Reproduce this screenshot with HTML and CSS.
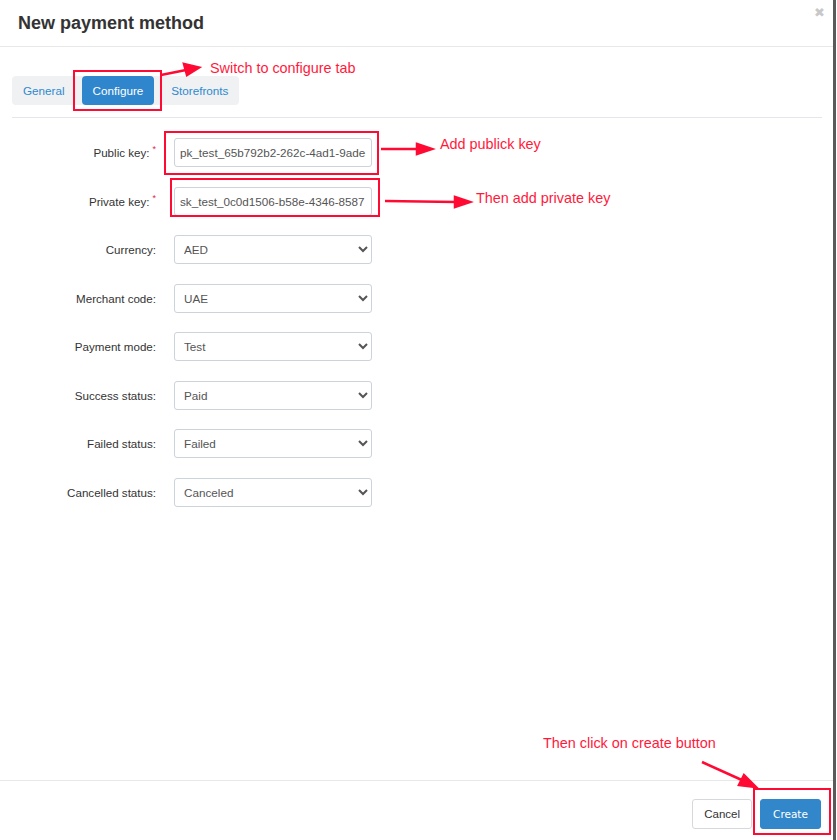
FILE: index.html
```html
<!DOCTYPE html>
<html lang="en">
<head>
  <meta charset="UTF-8" />
  <title>New payment method</title>
  <link rel="stylesheet" href="styles.css">
</head>
<body>
  <div class="modal">
    <div class="modal-header">
      <h3>New payment method</h3>
      <span class="close">&#10006;</span>
    </div>

    <div class="modal-body">
      <div class="tabs">
        <a class="tab">General</a>
        <a class="tab active">Configure</a>
        <a class="tab">Storefronts</a>
      </div>

      <div class="form">
        <div class="row">
          <label>Public key:<span class="req">*</span></label>
          <input type="text" value="pk_test_65b792b2-262c-4ad1-9ade" />
        </div>
        <div class="row">
          <label>Private key:<span class="req">*</span></label>
          <input type="text" value="sk_test_0c0d1506-b58e-4346-8587" />
        </div>
        <div class="row">
          <label>Currency:</label>
          <select><option>AED</option></select>
        </div>
        <div class="row">
          <label>Merchant code:</label>
          <select><option>UAE</option></select>
        </div>
        <div class="row">
          <label>Payment mode:</label>
          <select><option>Test</option></select>
        </div>
        <div class="row">
          <label>Success status:</label>
          <select><option>Paid</option></select>
        </div>
        <div class="row">
          <label>Failed status:</label>
          <select><option>Failed</option></select>
        </div>
        <div class="row">
          <label>Cancelled status:</label>
          <select><option>Canceled</option></select>
        </div>
      </div>
    </div>

    <div class="modal-footer">
      <button class="btn">Cancel</button>
      <button class="btn btn-primary">Create</button>
    </div>
  </div>

  <div class="scroll-edge"></div>

  <!-- annotations drawn over the screenshot -->
  <svg class="notes" width="837" height="840" viewBox="0 0 837 840">
    <g fill="none" stroke="#ff0a33" stroke-width="2">
      <rect x="74" y="71" width="87" height="39"/>
      <rect x="165" y="132" width="213" height="42"/>
      <rect x="171" y="179" width="208" height="37"/>
      <rect x="754" y="789" width="76" height="45"/>
    </g>
    <g stroke="#ff0a33" stroke-width="2.5" fill="#ff0a33">
      <line x1="161" y1="75" x2="186" y2="70"/>
      <polygon points="184,64 199,67.5 187,75"/>
      <line x1="381" y1="149" x2="418" y2="149"/>
      <polygon points="417,144 432,149 417,154"/>
      <line x1="385" y1="201" x2="456" y2="202"/>
      <polygon points="455,197 470,202 455,207"/>
      <line x1="702" y1="762" x2="744" y2="781"/>
      <polygon points="739,785 756,787 744,775"/>
    </g>
  </svg>
  <span class="note n1">Switch to configure tab</span>
  <span class="note n2">Add publick key</span>
  <span class="note n3">Then add private key</span>
  <span class="note n4">Then click on create button</span>
</body>
</html>
```

FILE: styles.css
```css
body {
  margin: 0;
  width: 837px;
  height: 840px;
  overflow: hidden;
  background: #fff;
  font-family: "Liberation Sans", Arial, sans-serif;
  color: #333;
  position: relative;
}

.modal {
  width: 833px;
  height: 840px;
  display: flex;
  flex-direction: column;
  background: #fff;
}

.modal-header {
  height: 47px;
  border-bottom: 1px solid #e8e8e8;
  padding: 0 18px;
  display: flex;
  align-items: center;
  justify-content: space-between;
  box-sizing: border-box;
}

.modal-header h3 {
  margin: 0;
  font-size: 18px;
  font-weight: bold;
  color: #333;
}

.close {
  color: #c8c8c8;
  font-size: 13px;
  align-self: flex-start;
  margin-top: 5px;
  margin-right: -10px;
}

.modal-body {
  flex: 1;
  padding: 29px 11px 0 12px;
}

.tabs {
  display: inline-flex;
  background: #f0f1f2;
  border-radius: 4px;
  height: 29px;
  align-items: center;
  gap: 6px;
}

.tab {
  font-size: 11.7px;
  color: #2d8ad0;
  padding: 0 11px;
  line-height: 29px;
  border-radius: 4px;
}

.tab.active {
  background: #2f86cc;
  color: #fff;
}

.form {
  border-top: 1px solid #e3e6ea;
  margin-top: 12px;
  padding-top: 20px;
}

.row {
  display: flex;
  align-items: center;
  height: 29px;
  margin-bottom: 19.5px;
}

.row label {
  width: 144px;
  text-align: right;
  font-size: 11.6px;
  color: #333;
  margin-right: 18px;
}

.req {
  color: #e0244a;
  font-size: 9px;
  vertical-align: top;
  margin-left: 3px;
  position: relative;
  top: -2px;
}

.row input,
.row select {
  width: 198px;
  height: 29px;
  box-sizing: border-box;
  border: 1px solid #ccd3da;
  border-radius: 3px;
  background: #fff;
  font-family: "Liberation Sans", Arial, sans-serif;
  font-size: 11.7px;
  color: #555;
}

.row input {
  padding: 0 5px;
}

.row select {
  padding: 0 5px;
}

.modal-footer {
  height: 60px;
  box-sizing: border-box;
  border-top: 1px solid #e8e8e8;
  display: flex;
  justify-content: flex-end;
  align-items: flex-start;
  padding: 18px 12px 0 0;
  gap: 8px;
}

.btn {
  height: 30px;
  padding: 0 11px;
  font-size: 11.5px;
  font-family: "Liberation Sans", Arial, sans-serif;
  color: #333;
  background: #fff;
  border: 1px solid #d5d9dd;
  border-radius: 3px;
}

.btn-primary {
  background: #3287cb;
  border-color: #3287cb;
  color: #fff;
  font-family: "DejaVu Sans", sans-serif;
  font-size: 10.5px;
  width: 61px;
}

.scroll-edge {
  position: absolute;
  top: 0;
  right: 1px;
  width: 3px;
  height: 840px;
  background: #5a5a5a;
}

.notes {
  position: absolute;
  top: 0;
  left: 0;
}

.note {
  position: absolute;
  color: #ff1a3c;
  font-size: 14.4px;
  font-family: "Liberation Sans", Arial, sans-serif;
  white-space: nowrap;
}

.n1 { left: 210px; top: 60px; }
.n2 { left: 440px; top: 136px; }
.n3 { left: 476px; top: 190px; }
.n4 { left: 543px; top: 735px; }
```
